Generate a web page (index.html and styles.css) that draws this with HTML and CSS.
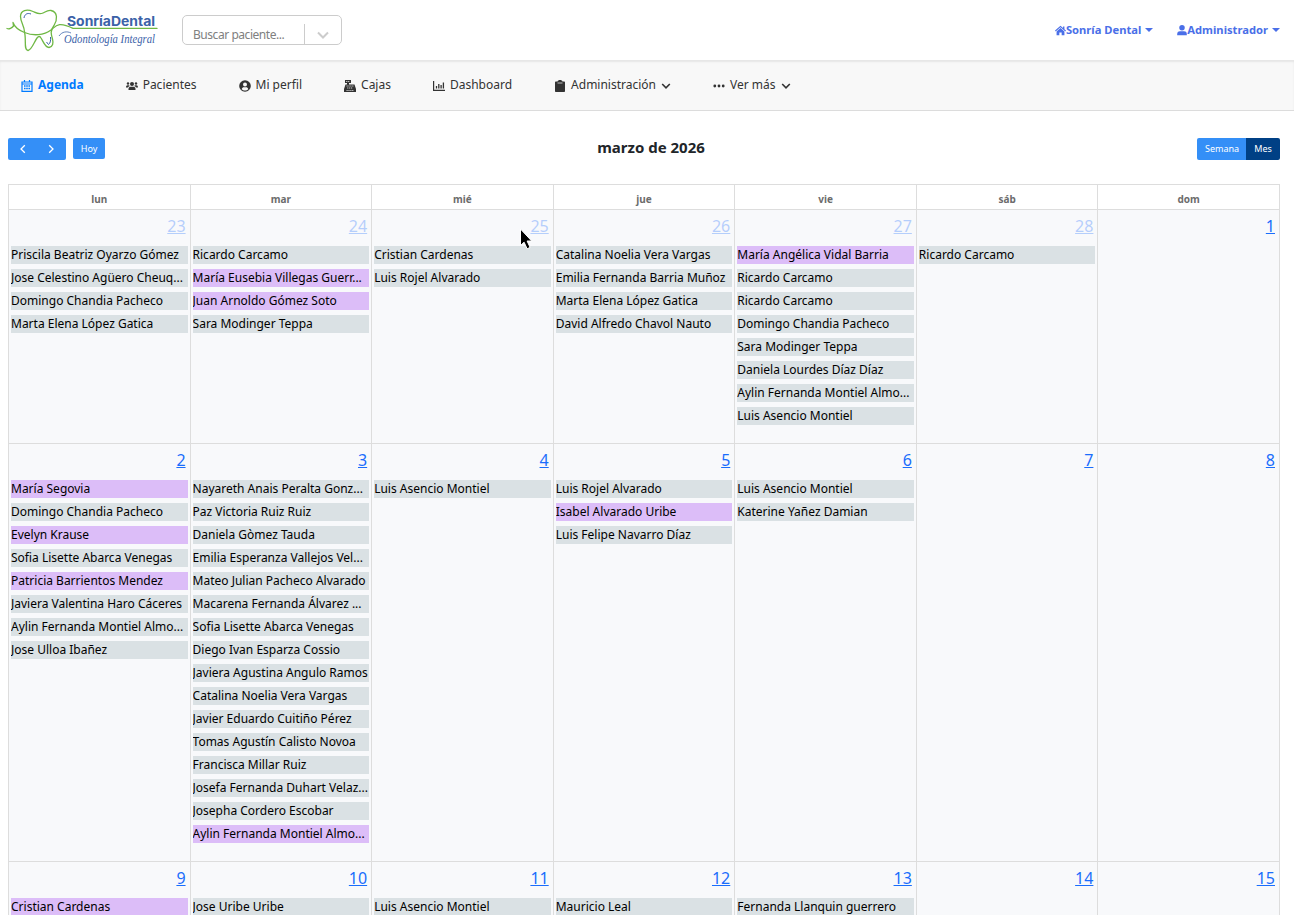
FILE: index.html
```
<!DOCTYPE html>
<html lang="es">
<head>
  <meta charset="UTF-8">
  <meta name="viewport" content="width=device-width, initial-scale=1.0">
  <title>Sonría Dental - Agenda</title>
  <link rel="stylesheet" href="styles.css">
</head>
<body>
  <header class="topbar">
    <svg class="logo" width="165" height="60" viewBox="0 0 165 60">
      <g fill="none" stroke="#6fb844" stroke-width="1.3" stroke-linecap="round" stroke-linejoin="round">
        <path d="M7 28.500C9 29.500 12 28 13.500 26L13 22.500C14.500 27 17 29.500 24.500 32.500C33 36 44 35.500 51 30C56 26 58 21 73 28.400H157"/>
        <path d="M24.500 32C24.500 26 20.500 22 20.500 16.500C20.500 10 27 9 33 11.500C36 12.800 39 15 43 13C46 11.500 48 10 51 10.500C58 12 57.500 20 54 25.500C50 31 51 34 52.500 39C53.500 43 53 47 49 47.500C45 47.500 43.500 42 41 38C40 36 38.500 36 37 38C34 42 32 49.500 28 50.500C23.500 50 26.500 40 24.500 32Z"/>
      </g>
      <path d="M24 18C24.500 14.500 27 12.500 31 14M50.500 37C51 41 50 43.500 48.500 44.500L46.500 42" fill="none" stroke="#3b62a8" stroke-width="1"/>
      <path d="M59 36C62 31.500 67 31 71 33" fill="none" stroke="#3b62a8" stroke-width=".8"/>
      <text class="logo-name" x="67" y="25.500" textLength="88" lengthAdjust="spacingAndGlyphs">SonríaDental</text>
      <text class="logo-sub" x="64" y="42.500" textLength="91" lengthAdjust="spacingAndGlyphs">Odontología Integral</text>
    </svg>
    <div class="search">
      <span class="search-text">Buscar paciente...</span>
      <span class="search-arrow">
        <svg width="14" height="14" viewBox="0 0 14 14"><path d="M2 4.500l5 5 5-5" fill="none" stroke="#ccc" stroke-width="2"/></svg>
      </span>
    </div>
    <div class="account">
      <a class="account-link">
        <svg width="11" height="11" viewBox="0 0 16 16" fill="currentColor"><path d="M8 1L0 8l1 1.300L8 3.200l7 6.100L16 8l-2.300-2V2h-2v2.200zM8 4.500L2.300 9.500V15h4v-4h3.400v4h4V9.500z"/></svg>
        <span>Sonría Dental</span><i class="caret"></i>
      </a>
      <a class="account-link">
        <svg width="10" height="11" viewBox="0 0 14 16" fill="currentColor"><circle cx="7" cy="4" r="4"/><path d="M0 15v-2c0-3 2-4 4-4h6c2 0 4 1 4 4v2z"/></svg>
        <span>Administrador</span><i class="caret"></i>
      </a>
    </div>
  </header>

  <nav class="menu">
    <a class="menu-item active">
      <svg width="12" height="12" viewBox="0 0 12 12"><path d="M1 2h10v9.300H1zM1 4h10M3.500 0v2.500M8.500 0v2.500" fill="none" stroke="currentColor" stroke-width="1.200"/><path d="M3 6h6M3 8.500h6" stroke="currentColor" stroke-width="1.500" stroke-dasharray="1.600 .6"/></svg>
      Agenda
    </a>
    <a class="menu-item">
      <svg width="12" height="12" viewBox="0 0 12 12" fill="currentColor"><circle cx="6" cy="4" r="2"/><circle cx="2" cy="3.500" r="1.200"/><circle cx="10" cy="3.500" r="1.200"/><path d="M2.500 10V9c0-1.500 1-2.300 2-2.300h3c1 0 2 .8 2 2.300v1zM0 7.500C0 6 .6 5.300 1.500 5.300h1.300c.4 0 .8.600.8.900-1 .3-1.500.7-1.700 1.300zM12 7.500c0-1.500-.6-2.200-1.500-2.200H9.200c-.4 0-.8.600-.8.900 1 .3 1.500.7 1.700 1.300z"/></svg>
      Pacientes
    </a>
    <a class="menu-item">
      <svg width="12" height="12" viewBox="0 0 12 12"><circle cx="6" cy="6" r="5.800" fill="currentColor"/><circle cx="6" cy="4.500" r="2" fill="#f8f8f8"/><path d="M2.700 9.200c.4-1.500 1.300-2 2-2h2.600c.7 0 1.600.5 2 2-1.800 1.800-4.800 1.800-6.600 0z" fill="#f8f8f8"/></svg>
      Mi perfil
    </a>
    <a class="menu-item">
      <svg width="12" height="12" viewBox="0 0 12 12"><path d="M1 0h6v3H5v1.500h5.500L12 9v3H0V9l1.500-4.500H3V3H1z" fill="currentColor"/><path d="M2.200 1.500h3.500M2.500 6h7M3.200 8h5.600M2.500 10.500h7" stroke="#f8f8f8" stroke-width=".8" stroke-dasharray="1.200 .7"/></svg>
      Cajas
    </a>
    <a class="menu-item">
      <svg width="12" height="12" viewBox="0 0 12 12" fill="none" stroke="currentColor"><path d="M.6 1v9.400H12" stroke-width="1.200"/><path d="M3.500 8.500V6M5.800 8.500V4M8.100 8.500V5M10.400 8.500V2.500" stroke-width="1.300"/></svg>
      Dashboard
    </a>
    <a class="menu-item">
      <svg width="12" height="12" viewBox="0 0 12 12" fill="currentColor"><path d="M2 1.500h1.500C4 .500 4.500 0 6 0s2 .5 2.500 1.500H10c.6 0 1 .4 1 1V11c0 .6-.4 1-1 1H2c-.6 0-1-.4-1-1V2.500c0-.6.4-1 1-1z"/><path d="M3.500 3h5" stroke="#f8f8f8" stroke-width=".7"/></svg>
      Administración
      <svg class="chevron" width="10" height="10" viewBox="0 0 10 10"><path d="M1.200 3L5 6.800 8.800 3" fill="none" stroke="currentColor" stroke-width="1.600"/></svg>
    </a>
    <a class="menu-item">
      <svg width="12" height="12" viewBox="0 0 12 12" fill="currentColor"><circle cx="1.800" cy="6" r="1.400"/><circle cx="6" cy="6" r="1.400"/><circle cx="10.200" cy="6" r="1.400"/></svg>
      Ver más
      <svg class="chevron" width="10" height="10" viewBox="0 0 10 10"><path d="M1.200 3L5 6.800 8.800 3" fill="none" stroke="currentColor" stroke-width="1.600"/></svg>
    </a>
  </nav>

  <main class="agenda">
    <div class="toolbar">
      <div class="toolbar-side">
        <div class="btn-group">
          <button class="btn btn-arrow"><svg width="8" height="10" viewBox="0 0 8 10"><path d="M5.800 1.200L2 5l3.800 3.800" fill="none" stroke="#fff" stroke-width="1.300"/></svg></button>
          <button class="btn btn-arrow next"><svg width="8" height="10" viewBox="0 0 8 10"><path d="M2.200 1.200L6 5 2.200 8.800" fill="none" stroke="#fff" stroke-width="1.300"/></svg></button>
        </div>
        <button class="btn btn-today">Hoy</button>
      </div>
      <h2 class="title">marzo de 2026</h2>
      <div class="toolbar-side right">
        <div class="btn-group">
          <button class="btn btn-week">Semana</button>
          <button class="btn btn-month">Mes</button>
        </div>
      </div>
    </div>
    <div class="calendar" id="calendar">
      <div class="weekday">lun</div>
      <div class="weekday">mar</div>
      <div class="weekday">mié</div>
      <div class="weekday">jue</div>
      <div class="weekday">vie</div>
      <div class="weekday">sáb</div>
      <div class="weekday">dom</div>
    </div>
  </main>

  <svg class="pointer" width="16" height="24" viewBox="0 0 16 24"><path d="M1.500 1v16.500l3.600-3.300 3 6.600 3-1.400-3-6.400h4.600z" fill="#000" stroke="#fff" stroke-width="1"/></svg>

  <script>
    const calendar = document.getElementById('calendar');

    // Un asterisco al inicio marca las citas en color lila
    const days = [
      { day: 23, other: true, events: ['Priscila Beatriz Oyarzo Gómez', 'Jose Celestino Agüero Cheuq...', 'Domingo Chandia Pacheco', 'Marta Elena López Gatica'] },
      { day: 24, other: true, events: ['Ricardo Carcamo', '*María Eusebia Villegas Guerr...', '*Juan Arnoldo Gómez Soto', 'Sara Modinger Teppa'] },
      { day: 25, other: true, events: ['Cristian Cardenas', 'Luis Rojel Alvarado'] },
      { day: 26, other: true, events: ['Catalina Noelia Vera Vargas', 'Emilia Fernanda Barria Muñoz', 'Marta Elena López Gatica', 'David Alfredo Chavol Nauto'] },
      { day: 27, other: true, events: ['*María Angélica Vidal Barria', 'Ricardo Carcamo', 'Ricardo Carcamo', 'Domingo Chandia Pacheco', 'Sara Modinger Teppa', 'Daniela Lourdes Díaz Díaz', 'Aylin Fernanda Montiel Almo...', 'Luis Asencio Montiel'] },
      { day: 28, other: true, events: ['Ricardo Carcamo'] },
      { day: 1, events: [] },
      { day: 2, events: ['*María Segovia', 'Domingo Chandia Pacheco', '*Evelyn Krause', 'Sofia Lisette Abarca Venegas', '*Patricia Barrientos Mendez', 'Javiera Valentina Haro Cáceres', 'Aylin Fernanda Montiel Almo...', 'Jose Ulloa Ibañez'] },
      { day: 3, events: ['Nayareth Anais Peralta Gonz...', 'Paz Victoria Ruiz Ruiz', 'Daniela Gòmez Tauda', 'Emilia Esperanza Vallejos Vel...', 'Mateo Julian Pacheco Alvarado', 'Macarena Fernanda Álvarez ...', 'Sofia Lisette Abarca Venegas', 'Diego Ivan Esparza Cossio', 'Javiera Agustina Angulo Ramos', 'Catalina Noelia Vera Vargas', 'Javier Eduardo Cuitiño Pérez', 'Tomas Agustín Calisto Novoa', 'Francisca Millar Ruiz', 'Josefa Fernanda Duhart Velaz...', 'Josepha Cordero Escobar', '*Aylin Fernanda Montiel Almo...'] },
      { day: 4, events: ['Luis Asencio Montiel'] },
      { day: 5, events: ['Luis Rojel Alvarado', '*Isabel Alvarado Uribe', 'Luis Felipe Navarro Díaz'] },
      { day: 6, events: ['Luis Asencio Montiel', 'Katerine Yañez Damian'] },
      { day: 7, events: [] },
      { day: 8, events: [] },
      { day: 9, events: ['*Cristian Cardenas'] },
      { day: 10, events: ['Jose Uribe Uribe'] },
      { day: 11, events: ['Luis Asencio Montiel'] },
      { day: 12, events: ['Mauricio Leal'] },
      { day: 13, events: ['Fernanda Llanquin guerrero'] },
      { day: 14, events: [] },
      { day: 15, events: [] }
    ];

    days.forEach(item => {
      const cell = document.createElement('div');
      cell.className = item.other ? 'day other' : 'day';

      const number = document.createElement('a');
      number.className = 'day-number';
      number.textContent = item.day;
      cell.appendChild(number);

      item.events.forEach(name => {
        const event = document.createElement('div');
        event.className = name[0] === '*' ? 'event lilac' : 'event';
        event.textContent = name.replace('*', '');
        cell.appendChild(event);
      });

      calendar.appendChild(cell);
    });
  </script>
</body>
</html>
```

FILE: styles.css
```
* {
  box-sizing: border-box;
}
body {
  margin: 0;
  height: 915px;
  overflow: hidden;
  background-color: #fff;
  font-family: "Noto Sans", sans-serif;
  font-size: 12px;
  color: #212529;
}
.topbar {
  display: flex;
  align-items: center;
  height: 60px;
}
.logo {
  display: block;
}
.logo-name {
  font-family: "Inter", sans-serif;
  font-size: 13px;
  font-weight: 700;
  fill: #3b62a8;
}
.logo-sub {
  font-family: "Liberation Serif", serif;
  font-size: 12px;
  font-style: italic;
  fill: #3b62a8;
}
.search {
  display: flex;
  width: 160px;
  height: 30px;
  margin-left: 17px;
  border: 1px solid #ccc;
  border-radius: 5px;
}
.search-text {
  width: 122px;
  padding: 10px 0 0 10px;
  font-size: 12px;
  line-height: 17px;
  letter-spacing: -0.45px;
  color: #808080;
  border-right: 1px solid #ccc;
  clip-path: inset(8px 0 0 0);
}
.search-arrow {
  padding: 12px 0 0 11px;
  line-height: 0;
}
.account {
  display: flex;
  gap: 24px;
  margin-left: auto;
  margin-right: 14px;
}
.account-link {
  display: flex;
  align-items: center;
  font-size: 11.2px;
  font-weight: 700;
  line-height: 15px;
  color: #4a6fe8;
}
.account-link span {
  margin-top: -2px;
}
.caret {
  margin-left: 4px;
  border: 4px solid transparent;
  border-top-color: #4a6fe8;
  border-bottom: 0;
}
.menu {
  display: flex;
  gap: 42px;
  height: 51px;
  padding: 16px 0 0 21px;
  background-color: #f8f8f8;
  border-bottom: 1px solid #dcdcdc;
  box-shadow: inset 0 2px 2px #e6e6e6;
}
.menu-item {
  display: flex;
  align-items: center;
  gap: 5px;
  height: 17px;
  color: #333;
}
.menu-item svg {
  position: relative;
  top: 1px;
}
.menu-item.active {
  font-weight: 700;
  color: #007bff;
}
.agenda {
  padding: 27px 14px 0 8px;
}
.toolbar {
  display: flex;
  justify-content: space-between;
  height: 46px;
}
.toolbar-side {
  display: flex;
  align-items: flex-start;
  gap: 7px;
  width: 130px;
}
.toolbar-side.right {
  justify-content: flex-end;
}
.title {
  margin: -2px 0 0 14px;
  font-size: 15px;
  line-height: 23px;
}
.btn-group {
  display: flex;
  overflow: hidden;
  border-radius: 2px;
}
.btn {
  display: flex;
  align-items: center;
  justify-content: center;
  height: 22px;
  padding: 0;
  border: none;
  font-family: inherit;
  font-size: 9px;
  color: #fff;
  background-color: #348ff7;
}
.btn-arrow {
  width: 29px;
}
.btn-arrow.next {
  padding-right: 2px;
}
.btn-today {
  width: 32px;
  height: 21px;
  border-radius: 2px;
}
.btn-week {
  width: 49px;
  padding: 0 0 1px 1px;
}
.btn-month {
  width: 34px;
  padding-bottom: 1px;
  background-color: #004085;
}
.calendar {
  display: grid;
  grid-template-columns: repeat(7, minmax(0, 1fr));
  border-top: 1px solid #ddd;
  border-left: 1px solid #ddd;
}
.weekday {
  height: 25px;
  padding-top: 7px;
  font-size: 10px;
  line-height: 14px;
  font-weight: 700;
  text-align: center;
  color: #6c6c6c;
  border-right: 1px solid #ddd;
  border-bottom: 1px solid #ddd;
}
.day {
  padding: 4px 2px 13px;
  background-color: #f8f9fb;
  border-right: 1px solid #ddd;
  border-bottom: 1px solid #ddd;
}
.day-number {
  display: block;
  height: 32px;
  padding-right: 2px;
  font-size: 16px;
  line-height: 24px;
  text-align: right;
  text-decoration: underline;
  color: #1a6dfc;
}
.other .day-number {
  opacity: 0.3;
}
.event {
  height: 18px;
  margin-bottom: 5px;
  line-height: 18px;
  overflow: hidden;
  white-space: nowrap;
  color: #000;
  background-color: #dae1e4;
}
.event.lilac {
  background-color: #dcbdf8;
}
.pointer {
  position: absolute;
  left: 519px;
  top: 228px;
}
```
